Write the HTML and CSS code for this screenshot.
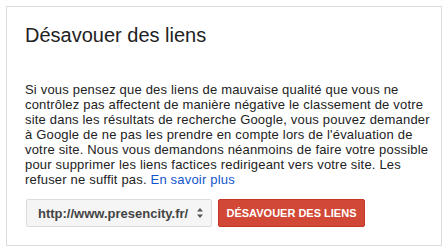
FILE: index.html
```html
<!DOCTYPE html>
<html lang="fr">
<head>
<meta charset="utf-8">
<title>Désavouer des liens</title>
<link rel="stylesheet" href="styles.css">
</head>
<body>
<div class="card">
  <h1 class="title">Désavouer des liens</h1>
  <p class="desc">Si vous pensez que des liens de mauvaise qualité que vous ne contrôlez pas affectent de manière négative le classement de votre site dans les résultats de recherche Google, vous pouvez demander à Google de ne pas les prendre en compte lors de l'évaluation de votre site. Nous vous demandons néanmoins de faire votre possible pour supprimer les liens factices redirigeant vers votre site. Les refuser ne suffit pas. <a class="link" href="#">En savoir plus</a></p>
  <div class="actions">
    <div class="select">
      <span class="select-text">http://www.presencity.fr/</span>
      <svg class="arrows" width="6" height="10" viewBox="0 0 6 10"><path d="M3 0 L6 3.5 L0 3.5 Z M0 6.5 L6 6.5 L3 10 Z" fill="#555"/></svg>
    </div>
    <button class="btn">Désavouer des liens</button>
  </div>
</div>
</body>
</html>
```
FILE: styles.css
```css
html, body {
  margin: 0;
  padding: 0;
  background: #fff;
}
body {
  font-family: Arial, "Liberation Sans", sans-serif;
  color: #222;
}
.card {
  box-sizing: border-box;
  margin: 6px 0 0 6px;
  width: 436px;
  height: 240px;
  border: 1px solid #dcdcdc;
  padding: 16px 9px 0 18px;
}
.title {
  margin: 0;
  font-size: 20px;
  line-height: 24px;
  font-weight: normal;
  color: #222;
}
.desc {
  margin: 35px 0 0 0;
  width: 408px;
  font-size: 13px;
  line-height: 15px;
  letter-spacing: 0.19px;
  color: #222;
}
.link {
  color: #15c;
  text-decoration: none;
}
.actions {
  display: flex;
  gap: 6px;
  margin-top: 12px;
  margin-left: 1px;
}
.select {
  box-sizing: border-box;
  width: 186px;
  height: 28px;
  display: flex;
  align-items: center;
  justify-content: space-between;
  padding: 0 8px 0 11px;
  background: #f5f5f5;
  border: 1px solid #dcdcdc;
  border-radius: 2px;
}
.select-text {
  font-size: 13px;
  font-weight: bold;
  color: #444;
}
.arrows {
  display: block;
}
.btn {
  box-sizing: border-box;
  width: 147px;
  height: 28px;
  padding: 0;
  background: #d14836;
  border: 1px solid #c53727;
  border-radius: 2px;
  color: #fff;
  font-family: Arial, "Liberation Sans", sans-serif;
  font-size: 11px;
  font-weight: bold;
  text-transform: uppercase;
}
```
